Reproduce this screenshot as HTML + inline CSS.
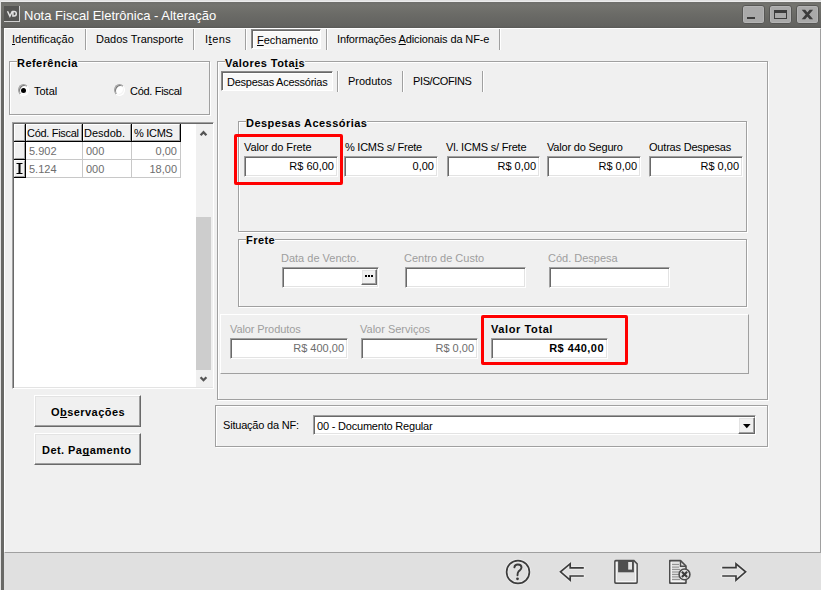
<!DOCTYPE html>
<html><head><meta charset="utf-8">
<style>
*{margin:0;padding:0;box-sizing:border-box}
html,body{width:821px;height:590px;overflow:hidden;background:#e2e2e2}
body{position:relative;font-family:"Liberation Sans",sans-serif;font-size:11px;color:#000}
.a{position:absolute}
.t{position:absolute;white-space:nowrap;line-height:13px}
.b{font-weight:bold;letter-spacing:0.45px}
.g{color:#9e9e9e}
.u{text-decoration:underline;text-decoration-skip-ink:none}
.grp{position:absolute;border:1px solid #a0a0a0;box-shadow:1px 1px 0 #fff, inset 1px 1px 0 #fff}
.sep{position:absolute;width:2px;border-left:1px solid #a0a0a0;border-right:1px solid #fff}
.edit{position:absolute;background:#fff;border:1px solid;border-color:#a0a0a0 #fff #fff #a0a0a0;box-shadow:inset 1px 1px 0 #696969, inset -1px -1px 0 #e3e3e3}
.btn{position:absolute;background:#f0f0f0;border:1px solid;border-color:#fff #696969 #696969 #fff;box-shadow:inset -1px -1px 0 #a0a0a0, inset 1px 1px 0 #e3e3e3}
.radio{width:11px;height:12px;border-radius:50%;background:#fff;border:1px solid;border-color:#a0a0a0 #fff #fff #a0a0a0;box-shadow:inset 1px 1px 0 #777, inset -1px -1px 0 #f4f4f4}
.press{background:#f8f8f8;border:1px solid;border-color:#8a8a8a #fff #fff #8a8a8a;box-shadow:inset 1px 1px 0 #696969, inset 2px 2px 0 #fff}
.red{position:absolute;border:3px solid #ff0000;border-radius:2px}
.val{position:absolute;right:3px;top:3px;white-space:nowrap;line-height:13px}
</style></head><body>
<!-- window frame -->
<div class="a" style="left:1px;top:2px;width:820px;height:588px;background:#696966"></div>
<div class="a" style="left:1px;top:2px;width:820px;height:26px;background:linear-gradient(#6e6e6b,#74746f 12%,#6a6a66 50%,#636360 92%,#5a5a57)"></div>
<div class="a" style="left:1px;top:1px;width:820px;height:1px;background:#ededed"></div>
<!-- title bar -->
<div class="a" style="left:4px;top:6px;width:16px;height:16px;background:#555553;border-right:1px solid #cfcfcf;border-bottom:1px solid #cfcfcf"></div>
<svg class="a" style="left:0;top:0" width="20" height="20"><path d="M7.5 11.2L9.9 16.2L12.3 11.2M12.9 11.6H14.2Q16.3 11.6 16.3 13.8Q16.3 16 14.2 16H12.9Z" fill="none" stroke="#e2e2e2" stroke-width="1.5"/></svg>
<div class="t" style="left:24px;top:8px;font-size:13px;line-height:15px;color:#fff">Nota Fiscal Eletrônica - Alteração</div>
<!-- window buttons -->
<div class="a" style="left:742px;top:5px;width:23px;height:19px;background:#a9a9a9;border:1px solid #575755;border-radius:3px;box-shadow:inset 0 0 0 1px #b4b4b4"></div>
<div class="a" style="left:747px;top:17px;width:8px;height:2px;background:#3c3c3c"></div>
<div class="a" style="left:769px;top:5px;width:23px;height:19px;background:#a9a9a9;border:1px solid #575755;border-radius:3px;box-shadow:inset 0 0 0 1px #b4b4b4"></div>
<div class="a" style="left:774px;top:10px;width:13px;height:9px;border:1px solid #3c3c3c;border-top-width:3px"></div>
<div class="a" style="left:796px;top:5px;width:23px;height:19px;background:#a9a9a9;border:1px solid #575755;border-radius:3px;box-shadow:inset 0 0 0 1px #b4b4b4"></div>
<svg class="a" style="left:800px;top:8px" width="16" height="13"><path d="M1.7 1.8H5.2L13.1 11.2H9.6ZM9.6 1.8H13.1L5.2 11.2H1.7Z" fill="#3c3c3c"/></svg>

<!-- content panel -->
<div class="a" style="left:4px;top:28px;width:817px;height:525px;background:#f0f0f0;border-top:1px solid #fff;border-left:1px solid #fff;border-right:1px solid #a0a0a0;border-bottom:1px solid #a0a0a0"></div>
<!-- footer -->
<div class="a" style="left:4px;top:553px;width:817px;height:37px;background:#e0e0e0"></div>

<!-- tabs -->
<div class="t" style="left:12px;top:33px"><span class="u">I</span>dentificação</div>
<div class="sep" style="left:85px;top:29px;height:21px"></div>
<div class="t" style="left:96px;top:33px">Dados Transporte</div>
<div class="sep" style="left:193px;top:29px;height:21px"></div>
<div class="t" style="left:205px;top:33px;letter-spacing:0.5px">I<span class="u">t</span>ens</div>
<div class="sep" style="left:245px;top:29px;height:21px"></div>
<div class="a press" style="left:251px;top:29px;width:70px;height:20px"></div>
<div class="t" style="left:257px;top:34px"><span class="u">F</span>echamento</div>
<div class="sep" style="left:326px;top:29px;height:21px"></div>
<div class="t" style="left:337px;top:33px;letter-spacing:-0.12px">Informações <span class="u">A</span>dicionais da NF-e</div>
<div class="sep" style="left:499px;top:29px;height:21px"></div>

<!-- Referencia group -->
<div class="grp" style="left:9px;top:61px;width:201px;height:54px"></div>
<div class="t b" style="left:17px;top:57px;background:#f0f0f0">Referência</div>
<div class="a radio" style="left:18px;top:84px"></div>
<div class="a" style="left:21px;top:87.5px;width:5px;height:5px;border-radius:50%;background:#000"></div>
<div class="t" style="left:34px;top:85px">Total</div>
<div class="a radio" style="left:114px;top:84px"></div>
<div class="t" style="left:130px;top:85px;letter-spacing:-0.3px">Cód. Fiscal</div>

<!-- grid -->
<div class="a" style="left:12px;top:122px;width:202px;height:267px;background:#fff;border:1px solid;border-color:#a0a0a0 #fff #fff #a0a0a0;box-shadow:inset 1px 1px 0 #696969, inset -1px -1px 0 #e3e3e3"></div>
<!-- header cells -->
<div class="a" style="left:14px;top:124px;width:12px;height:18px;background:#000"></div>
<div class="a" style="left:14px;top:124px;width:11px;height:17px;background:#f0f0f0;border-left:1px solid #fff;border-top:1px solid #fff;border-right:1px solid #a0a0a0;border-bottom:1px solid #a0a0a0"></div>
<div class="a" style="left:26px;top:124px;width:155px;height:18px;background:#000"></div>
<div class="a" style="left:26px;top:124px;width:56px;height:17px;background:#f0f0f0;border-left:1px solid #fff;border-top:1px solid #fff;border-right:1px solid #a0a0a0;border-bottom:1px solid #a0a0a0"></div>
<div class="a" style="left:83px;top:124px;width:48px;height:17px;background:#f0f0f0;border-left:1px solid #fff;border-top:1px solid #fff;border-right:1px solid #a0a0a0;border-bottom:1px solid #a0a0a0"></div>
<div class="a" style="left:132px;top:124px;width:48px;height:17px;background:#f0f0f0;border-left:1px solid #fff;border-top:1px solid #fff;border-right:1px solid #a0a0a0;border-bottom:1px solid #a0a0a0"></div>
<div class="t" style="left:27px;top:127px;letter-spacing:-0.3px">Cód. Fiscal</div>
<div class="t" style="left:84px;top:127px">Desdob.</div>
<div class="t" style="left:134px;top:127px;letter-spacing:-0.3px">% ICMS</div>
<!-- indicator cells -->
<div class="a" style="left:14px;top:142px;width:12px;height:36px;background:#000"></div>
<div class="a" style="left:14px;top:142px;width:11px;height:17px;background:#f0f0f0;border-left:1px solid #fff;border-top:1px solid #fff;border-right:1px solid #a0a0a0;border-bottom:1px solid #a0a0a0"></div>
<div class="a" style="left:14px;top:160px;width:11px;height:17px;background:#f0f0f0;border-left:1px solid #fff;border-top:1px solid #fff;border-right:1px solid #a0a0a0;border-bottom:1px solid #a0a0a0"></div>
<svg class="a" style="left:16px;top:162px" width="8" height="13"><path d="M0.5 1.5H6.5M0.5 11.5H6.5M3.5 1.5V11.5" stroke="#000" stroke-width="1"/><path d="M3.5 2V11" stroke="#000" stroke-width="2"/></svg>
<!-- data cells lines -->
<div class="a" style="left:26px;top:159px;width:155px;height:1px;background:#c8c8c8"></div>
<div class="a" style="left:26px;top:177px;width:155px;height:1px;background:#c8c8c8"></div>
<div class="a" style="left:82px;top:142px;width:1px;height:36px;background:#c8c8c8"></div>
<div class="a" style="left:131px;top:142px;width:1px;height:36px;background:#c8c8c8"></div>
<div class="a" style="left:180px;top:142px;width:1px;height:36px;background:#c8c8c8"></div>
<div class="t" style="left:29px;top:145px;color:#6d6d6d">5.902</div>
<div class="t" style="left:86px;top:145px;color:#6d6d6d">000</div>
<div class="t" style="left:132px;top:145px;width:45px;text-align:right;color:#6d6d6d">0,00</div>
<div class="t" style="left:29px;top:163px;color:#6d6d6d">5.124</div>
<div class="t" style="left:86px;top:163px;color:#6d6d6d">000</div>
<div class="t" style="left:132px;top:163px;width:45px;text-align:right;color:#6d6d6d">18,00</div>
<!-- scrollbar -->
<div class="a" style="left:196px;top:124px;width:17px;height:263px;background:#f0f0f0"></div>
<div class="a" style="left:196px;top:217px;width:15px;height:153px;background:#cdcdcd"></div>
<svg class="a" style="left:198px;top:129px" width="12" height="8"><path d="M2.6 6.2L5.5 3.2L8.4 6.2" fill="none" stroke="#555" stroke-width="2.3"/></svg>
<svg class="a" style="left:198px;top:375px" width="12" height="8"><path d="M2.6 2.2L5.5 5.2L8.4 2.2" fill="none" stroke="#555" stroke-width="2.3"/></svg>

<!-- Observacoes buttons -->
<div class="btn" style="left:34px;top:395px;width:107px;height:32px"></div>
<div class="t b" style="left:51px;top:406px">O<span class="u">b</span>servações</div>
<div class="btn" style="left:34px;top:433px;width:107px;height:32px"></div>
<div class="t b" style="left:42px;top:444px">Det. Pa<span class="u">g</span>amento</div>

<!-- Valores Totais group -->
<div class="grp" style="left:217px;top:61px;width:551px;height:339px"></div>
<div class="t b" style="left:225px;top:57px;background:#f0f0f0">Valores Tota<span class="u">i</span>s</div>

<!-- inner tabs -->
<div class="a press" style="left:221px;top:71px;width:112px;height:20px"></div>
<div class="t" style="left:227px;top:76px;letter-spacing:-0.25px">Despesas Acessórias</div>
<div class="sep" style="left:337px;top:71px;height:21px"></div>
<div class="t" style="left:348px;top:75px">Produtos</div>
<div class="sep" style="left:402px;top:71px;height:21px"></div>
<div class="t" style="left:413px;top:75px;letter-spacing:-0.38px">PIS/COFINS</div>
<div class="sep" style="left:482px;top:71px;height:21px"></div>

<!-- Despesas group -->
<div class="grp" style="left:238px;top:121px;width:509px;height:111px"></div>
<div class="t b" style="left:246px;top:117px;background:#f0f0f0">Despesas Acessórias</div>

<div class="t" style="left:244px;top:141px;letter-spacing:-0.1px">Valor do Frete</div>
<div class="edit" style="left:244px;top:156px;width:94px;height:21px"><span class="val">R$ 60,00</span></div>
<div class="t" style="left:345px;top:141px;letter-spacing:-0.25px">% ICMS s/ Frete</div>
<div class="edit" style="left:344px;top:156px;width:94px;height:21px"><span class="val">0,00</span></div>
<div class="t" style="left:446px;top:141px;letter-spacing:-0.2px">Vl. ICMS s/ Frete</div>
<div class="edit" style="left:447px;top:156px;width:93px;height:21px"><span class="val">R$ 0,00</span></div>
<div class="t" style="left:547px;top:141px;letter-spacing:-0.2px">Valor do Seguro</div>
<div class="edit" style="left:547px;top:156px;width:94px;height:21px"><span class="val">R$ 0,00</span></div>
<div class="t" style="left:649px;top:141px;letter-spacing:-0.2px">Outras Despesas</div>
<div class="edit" style="left:649px;top:156px;width:94px;height:21px"><span class="val">R$ 0,00</span></div>
<div class="red" style="left:234px;top:134px;width:109px;height:51px"></div>

<!-- Frete group -->
<div class="grp" style="left:238px;top:239px;width:509px;height:68px"></div>
<div class="t b" style="left:246px;top:234px;background:#f0f0f0">Frete</div>
<div class="t g" style="left:281px;top:252px">Data de Vencto.</div>
<div class="edit" style="left:282px;top:267px;width:97px;height:21px"></div>
<div class="btn" style="left:361px;top:269px;width:16px;height:16px"></div>
<div class="a" style="left:365px;top:275px;width:2px;height:2px;background:#000"></div><div class="a" style="left:368px;top:275px;width:2px;height:2px;background:#000"></div><div class="a" style="left:371px;top:275px;width:2px;height:2px;background:#000"></div>
<div class="t g" style="left:404px;top:252px">Centro de Custo</div>
<div class="edit" style="left:405px;top:267px;width:121px;height:21px"></div>
<div class="t g" style="left:548px;top:252px">Cód. Despesa</div>
<div class="edit" style="left:549px;top:267px;width:121px;height:21px"></div>

<!-- totals panel -->
<div class="a" style="left:220px;top:314px;width:529px;height:60px;border:1px solid;border-color:#fff #a0a0a0 #a0a0a0 #fff"></div>
<div class="t g" style="left:230px;top:323px;letter-spacing:-0.1px">Valor Produtos</div>
<div class="edit" style="left:230px;top:338px;width:118px;height:21px"><span class="val" style="color:#6d6d6d">R$ 400,00</span></div>
<div class="t g" style="left:360px;top:323px">Valor Serviços</div>
<div class="edit" style="left:361px;top:338px;width:117px;height:21px"><span class="val" style="color:#6d6d6d">R$ 0,00</span></div>
<div class="t b" style="left:491px;top:323px;letter-spacing:0.6px">Valor Total</div>
<div class="edit" style="left:491px;top:338px;width:117px;height:21px"><span class="val b">R$ 440,00</span></div>
<div class="red" style="left:481px;top:315px;width:147px;height:50px"></div>

<!-- Situacao -->
<div class="grp" style="left:215px;top:405px;width:553px;height:42px"></div>
<div class="t" style="left:223px;top:419px;letter-spacing:-0.2px">Situação da NF:</div>
<div class="edit" style="left:313px;top:415px;width:443px;height:20px"><span class="t" style="left:3px;top:4px;letter-spacing:-0.2px">00 - Documento Regular</span></div>
<div class="btn" style="left:738px;top:417px;width:17px;height:17px"></div>
<svg class="a" style="left:743px;top:424px" width="8" height="5"><path d="M0 0H7.6L3.8 4.2Z" fill="#000"/></svg>

<!-- footer icons -->
<svg class="a" style="left:500px;top:555px" width="300" height="35">
 <g fill="none" stroke="#f2f2f2" stroke-width="3.6" stroke-linejoin="round" stroke-linecap="round" opacity="0.6">
  <circle cx="18" cy="17" r="11.4"/>
  <path d="M83.8 12.9H70.2V8.7L60.5 16.8L70.2 25.1V21H83.8"/>
  <path d="M222.2 12.7H236V8.8L245.6 16.8L236 25.1V21H222.2"/>
 </g>
 <g fill="none" stroke="#3c3c3c" stroke-width="1.7">
  <circle cx="18" cy="17" r="11.4"/>
  <path d="M14.4 12.4C14.6 10.4 16 9.5 17.9 9.5C19.9 9.5 21.5 10.7 21.5 12.6C21.5 14.6 19.7 15.2 18.6 16.4C17.8 17.3 17.5 18.3 17.5 20.3" stroke-width="1.9" stroke-linecap="round"/>
  <path d="M83.8 12.9H70.2V8.7L60.5 16.8L70.2 25.1V21H83.8"/>
  <path d="M222.2 12.7H236V8.8L245.6 16.8L236 25.1V21H222.2"/>
 </g>
 <circle cx="17.5" cy="23.8" r="1.4" fill="#3c3c3c"/>
 <!-- floppy -->
 <path d="M114.9 6.4Q114.9 5.6 115.7 5.6H133.9L137.1 8.8V27.3Q137.1 28.1 136.3 28.1H115.7Q114.9 28.1 114.9 27.3Z" fill="#e2e2e2" stroke="#4c4c4c" stroke-width="1.6"/>
 <path d="M116.3 7V26.7H135.7V9.4" fill="none" stroke="#fafafa" stroke-width="1"/>
 <rect x="118.1" y="5.6" width="15.8" height="11.7" fill="#4f4f4f"/>
 <rect x="128.2" y="7" width="3.8" height="7.6" fill="#e6e6e6"/>
 <!-- doc -->
 <path d="M169.8 5.6H180.5L186 11V28.1H169.8Z" fill="#e2e2e2" stroke="#4c4c4c" stroke-width="1.6" stroke-linejoin="round"/>
 <path d="M171.2 7V26.7H184.6" fill="none" stroke="#fafafa" stroke-width="1"/>
 <path d="M180.5 5.6V11.3H186" fill="none" stroke="#4c4c4c" stroke-width="1.4"/>
 <g stroke="#8a8a8a" stroke-width="1">
  <path d="M172 9.4H179M172 12.1H179M172 14.4H180M172 17H180M172 19.4H180M172 21.9H180M172 24.4H180"/>
 </g>
 <circle cx="184.5" cy="19.4" r="5.4" fill="#e2e2e2" stroke="#4c4c4c" stroke-width="1.6"/>
 <path d="M181.9 16.8L187.1 22M187.1 16.8L181.9 22" stroke="#3c3c3c" stroke-width="2.1"/>
</svg>
</body></html>
